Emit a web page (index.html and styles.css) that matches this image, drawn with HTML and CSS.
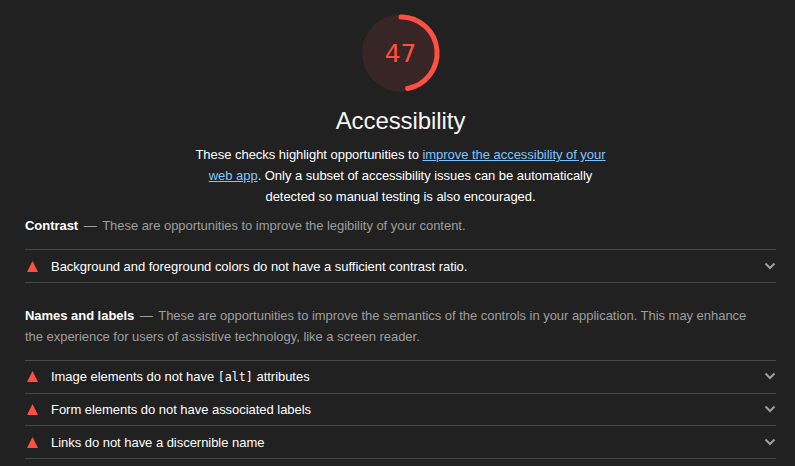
FILE: index.html
```html
<!DOCTYPE html>
<html lang="en"><head><meta charset="utf-8"><title>Accessibility</title><link rel="stylesheet" href="styles.css"></head>
<body>
<main>
<header class="summary">
<div class="gauge"><svg viewBox="0 0 80 80"><circle class="base" cx="40" cy="40" r="38.900"/><path class="arc" d="M40 3.900A36.100 36.100 0 0 1 46.700 75.470"/></svg><span class="score">47</span></div>
<h1>Accessibility</h1>
<p class="description">These checks highlight opportunities to <a href="#">improve the accessibility of your web app</a>. Only a subset of accessibility issues can be automatically detected so manual testing is also encouraged.</p>
</header>
<section class="group">
<p class="intro"><b>Contrast</b><span class="dash">—</span>These are opportunities to improve the legibility of your content.</p>
<ul class="audits">
<li class="low"><i class="fail"></i><span class="title">Background and foreground colors do not have a sufficient contrast ratio.</span><svg class="chevron" viewBox="0 0 12 8"><path d="M1.500 1.500 6 6l4.500-4.500"/></svg></li>
</ul>
</section>
<section class="group">
<p class="intro"><b>Names and labels</b><span class="dash">—</span>These are opportunities to improve the semantics of the controls in your application. This may enhance the experience for users of assistive technology, like a screen reader.</p>
<ul class="audits">
<li class="high"><i class="fail"></i><span class="title">Image elements do not have <code>[alt]</code> attributes</span><svg class="chevron" viewBox="0 0 12 8"><path d="M1.500 1.500 6 6l4.500-4.500"/></svg></li>
<li class="short"><i class="fail"></i><span class="title">Form elements do not have associated labels</span><svg class="chevron" viewBox="0 0 12 8"><path d="M1.500 1.500 6 6l4.500-4.500"/></svg></li>
<li class="low"><i class="fail"></i><span class="title">Links do not have a discernible name</span><svg class="chevron" viewBox="0 0 12 8"><path d="M1.500 1.500 6 6l4.500-4.500"/></svg></li>
</ul>
</section>
</main>
</body></html>
```
FILE: styles.css
```css
* { box-sizing: border-box; }
body { margin: 0; height: 466px; overflow: hidden; background: #212121; color: #fff; font: 13px/21px "Liberation Sans", Arial, sans-serif; letter-spacing: -0.035px; }
main { padding: 13px 19px 0 25px; }
.summary { display: flex; flex-direction: column; align-items: center; }
.gauge { display: grid; width: 80px; height: 80px; place-items: center; }
.gauge > * { grid-area: 1 / 1; }
.gauge svg { width: 80px; height: 80px; }
.base { fill: #372625; }
.arc { fill: none; stroke: #ff4e42; stroke-width: 5; stroke-linecap: round; }
.score { padding-top: 2px; color: #ff4e42; font: 25px/32px "DejaVu Sans", sans-serif; }
h1 { margin: 12px 0 0; font-size: 24px; line-height: 32px; font-weight: 400; letter-spacing: -0.08px; color: #f5f5f5; }
.description { width: 430px; margin: 7px 0 0; text-align: center; }
a { color: #80c4ff; }
.group { margin: 0 0 22px; }
.summary + .group { margin-top: 8px; }
.intro { margin: 0 0 13px; padding-right: 15px; color: #9e9e9e; }
.intro b { color: #fff; }
.dash { margin: 0 5.5px; }
.audits { list-style: none; margin: 0; padding: 0; border-top: 1px solid #494949; }
.audits li { height: 33px; display: flex; align-items: center; border-bottom: 1px solid #494949; padding: 0 0 0 2px; }
.audits .low { padding-top: 1px; }
.audits .high { padding-bottom: 1px; }
.audits .short { height: 32px; }
.fail { width: 11px; height: 11px; background: #ff4e42; clip-path: polygon(50% 0, 100% 100%, 0 100%); }
.title { margin-left: 13px; flex: 1; }
code { font: 11.7px "DejaVu Sans Mono", monospace; letter-spacing: 0; }
.chevron { width: 12px; height: 8px; margin: 0 0.5px 1px 0; fill: none; stroke: #9e9e9e; stroke-width: 2; }
```
